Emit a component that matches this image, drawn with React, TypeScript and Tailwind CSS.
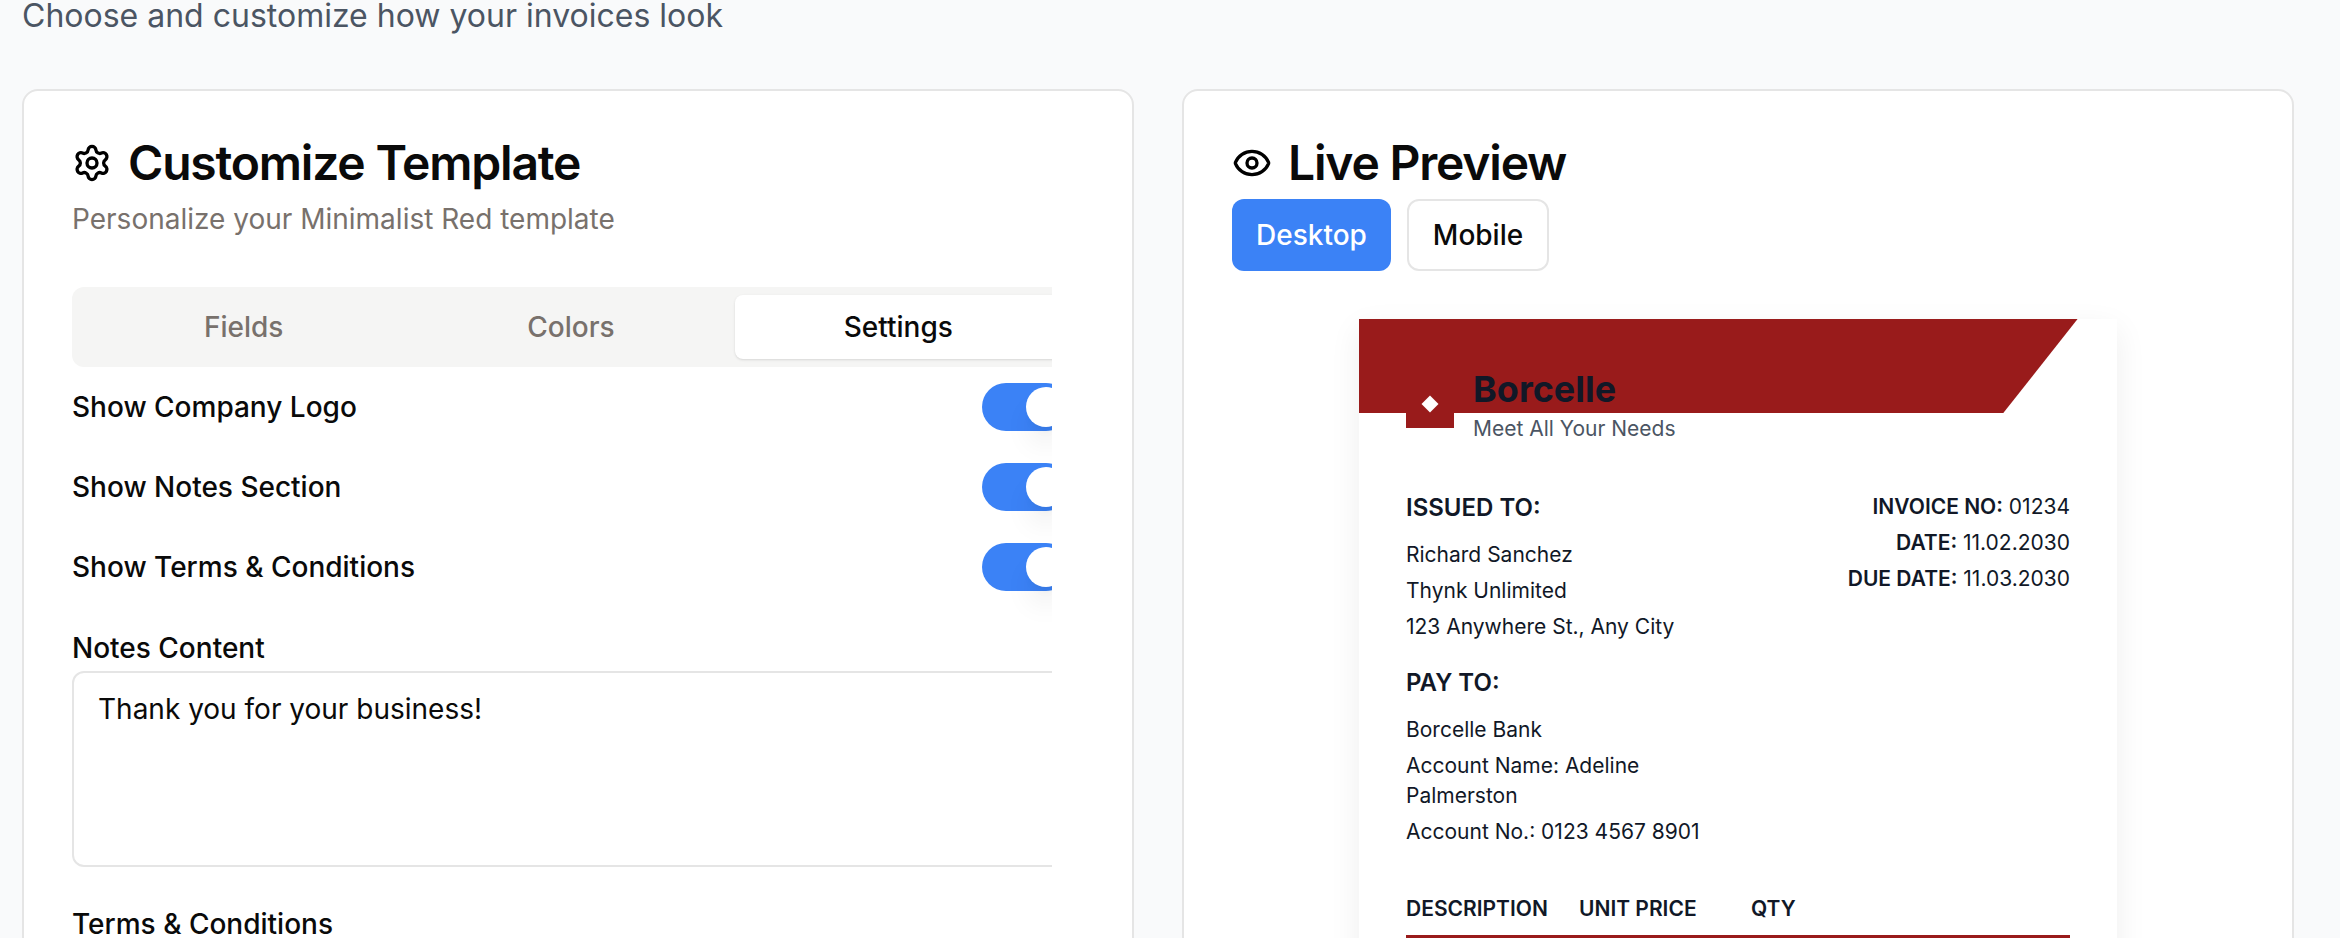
import { Eye, Settings } from "lucide-react";

const toggles = ["Show Company Logo", "Show Notes Section", "Show Terms & Conditions"];

function Toggle() {
  return (
    <div className="flex h-12 w-[88px] items-center rounded-full bg-[#3b82f6] px-1">
      <span className="ml-10 h-10 w-10 rounded-full bg-white shadow-[0_20px_30px_-6px_rgba(0,0,0,0.1),0_8px_12px_-8px_rgba(0,0,0,0.1)]" />
    </div>
  );
}

function CustomizeCard() {
  return (
    <section className="h-[900px] rounded-[16px] border-2 border-[#e5e5e5] bg-white p-12">
      <div className="flex items-center gap-4">
        <Settings className="h-10 w-10 text-black" />
        <h2 className="text-[48px] leading-[48px] font-semibold tracking-[-1.2px] text-[#0a0a0a]">Customize Template</h2>
      </div>
      <p className="mt-3 text-[28px] leading-10 text-[#78716c]">Personalize your Minimalist Red template</p>

      <div className="mt-12 w-[980px] overflow-hidden">
        <div className="w-[998px]">
          <div className="grid h-20 grid-cols-3 rounded-[12px] bg-[#f5f5f4] p-2 text-[28px] font-medium text-[#78716c]">
            <div className="flex items-center justify-center">Fields</div>
            <div className="flex items-center justify-center">Colors</div>
            <div className="flex items-center justify-center rounded-[8px] bg-white text-[#0a0a0a] shadow-sm">Settings</div>
          </div>

          <div className="mt-4 flex flex-col gap-8">
            {toggles.map((label) => (
              <div key={label} className="flex items-center justify-between">
                <span className="text-[28px] leading-10 font-medium text-[#0a0a0a]">{label}</span>
                <Toggle />
              </div>
            ))}
          </div>

          <label className="mt-[37px] mb-[3px] block text-[28px] leading-10 font-medium text-[#0a0a0a]">Notes Content</label>
          <textarea
            readOnly
            defaultValue="Thank you for your business!"
            className="block h-[196px] w-full resize-none rounded-[12px] border-2 border-[#e5e5e5] bg-white px-6 py-4 text-[28px] leading-10 text-[#0a0a0a] outline-none"
          />
          <label className="mt-[37px] block text-[28px] leading-10 font-medium text-[#0a0a0a]">Terms &amp; Conditions</label>
        </div>
      </div>
    </section>
  );
}

function Invoice() {
  return (
    <div className="relative mx-auto mt-12 h-[700px] w-[758px] bg-white text-[21px] leading-[30px] text-[#111827] shadow-[0_10px_30px_rgba(0,0,0,0.07)]">
      <div className="absolute top-0 left-0 h-[94px] w-full bg-[#991b1b] [clip-path:polygon(0_0,94.8%_0,85%_100%,0_100%)]" />

      <div className="relative flex gap-[19px] pt-[50px] pl-[47px]">
        <div className="mt-[11px] flex h-12 w-12 items-center justify-center bg-[#991b1b]">
          <span className="h-3 w-3 rotate-45 bg-white" />
        </div>
        <div>
          <div className="text-[36px] leading-10 font-bold text-[#111827]">Borcelle</div>
          <div className="mt-[6px] text-[21px] leading-7 text-[#4b5563]">Meet All Your Needs</div>
        </div>
      </div>

      <div className="relative mt-[49px] flex justify-between px-[47px]">
        <div className="w-[310px]">
          <h3 className="text-[24px] leading-8 font-semibold">ISSUED TO:</h3>
          <div className="mt-4 flex flex-col gap-[6px]">
            <p>Richard Sanchez</p>
            <p>Thynk Unlimited</p>
            <p>123 Anywhere St., Any City</p>
          </div>
          <h3 className="mt-[25px] text-[24px] leading-8 font-semibold">PAY TO:</h3>
          <div className="mt-4 flex flex-col gap-[6px]">
            <p>Borcelle Bank</p>
            <p>Account Name: Adeline Palmerston</p>
            <p>Account No.: 0123 4567 8901</p>
          </div>
        </div>
        <div className="flex flex-col gap-[6px] text-right">
          <p><span className="font-semibold">INVOICE NO:</span> 01234</p>
          <p><span className="font-semibold">DATE:</span> 11.02.2030</p>
          <p><span className="font-semibold">DUE DATE:</span> 11.03.2030</p>
        </div>
      </div>

      <div className="relative mx-[47px] mt-[47px] flex border-b-4 border-[#991b1b] pb-[11px] font-semibold">
        <div className="w-[173px]">DESCRIPTION</div>
        <div className="w-[172px]">UNIT PRICE</div>
        <div>QTY</div>
      </div>
    </div>
  );
}

function PreviewCard() {
  return (
    <section className="h-[900px] overflow-hidden rounded-[16px] border-2 border-[#e5e5e5] bg-white p-12">
      <div className="flex items-center gap-4">
        <Eye className="h-10 w-10 text-black" />
        <h2 className="text-[48px] leading-[48px] font-semibold tracking-[-1.2px] text-[#0a0a0a]">Live Preview</h2>
      </div>
      <div className="mt-3 flex gap-4 text-[28px] font-medium">
        <button className="h-[72px] w-[159px] rounded-[12px] bg-[#3b82f6] text-white">Desktop</button>
        <button className="h-[72px] w-[142px] rounded-[12px] border-2 border-[#e5e5e5] bg-white text-[#0a0a0a]">Mobile</button>
      </div>
      <Invoice />
    </section>
  );
}

export default function App() {
  return (
    <div className="h-[938px] overflow-hidden bg-[#f9fafb] pl-[22px] font-['Inter',sans-serif]">
      <p className="-mt-[8px] text-[32px] leading-[48px] text-[#4b5563]">Choose and customize how your invoices look</p>
      <div className="mt-[49px] grid w-[2272px] grid-cols-2 gap-12">
        <CustomizeCard />
        <PreviewCard />
      </div>
    </div>
  );
}
